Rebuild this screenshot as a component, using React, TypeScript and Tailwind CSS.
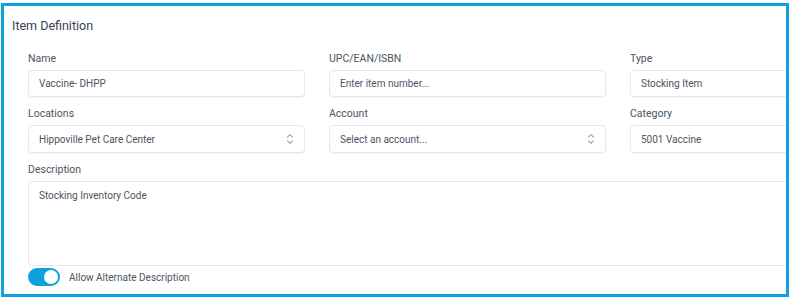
import React from "react";

const font = { fontFamily: "Roboto, 'Liberation Sans', sans-serif" };

function Chevrons() {
  return (
    <svg width="8" height="12" viewBox="0 0 8 12" fill="none" stroke="#9ca3af" strokeWidth="1.1" strokeLinecap="round" strokeLinejoin="round">
      <path d="M1.5 4.2 L4 1.7 L6.5 4.2" />
      <path d="M1.5 7.8 L4 10.3 L6.5 7.8" />
    </svg>
  );
}

function Field({ label, value, placeholder, select, h }: { label: string; value?: string; placeholder?: string; select?: boolean; h: string }) {
  return (
    <div className="flex flex-col">
      <div className="h-[14px] text-[10.5px] leading-[14px] text-[#4b5563]">{label}</div>
      <div className={`mt-[4px] ${h} flex items-center justify-between rounded-[4px] border border-[#e5e7eb] bg-white pl-[10px] pr-[10px] shadow-[0_1px_1px_rgba(0,0,0,0.04)]`}>
        <span className="text-[10px] text-[#4b5563]">{value ?? placeholder}</span>
        {select && <Chevrons />}
      </div>
    </div>
  );
}

export default function App() {
  return (
    <div className="w-[795px] h-[301px] bg-white" style={font}>
      <div className="ml-[1px] pt-[3px]">
        <div className="w-[788px] h-[294px] border-[3px] border-[#0ea1dd] overflow-hidden bg-white">
          <div className="pl-[8px] pt-[12px] h-[16px] text-[12.5px] leading-[16px] text-[#374151] box-content">Item Definition</div>
          <div className="pl-[24px] pt-[18px] w-[900px]">
            <div className="grid grid-cols-[277px_277px_277px] gap-x-[24px] gap-y-[10px]">
              <Field label="Name" value="Vaccine- DHPP" h="h-[27px]" />
              <Field label="UPC/EAN/ISBN" placeholder="Enter item number..." h="h-[27px]" />
              <Field label="Type" value="Stocking Item" h="h-[27px]" />
              <Field label="Locations" value="Hippoville Pet Care Center" select h="h-[28px]" />
              <Field label="Account" placeholder="Select an account..." select h="h-[28px]" />
              <Field label="Category" value="5001 Vaccine" h="h-[28px]" />
            </div>
            <div className="mt-[10px] h-[14px] text-[10.5px] leading-[14px] text-[#4b5563]">Description</div>
            <div className="mt-[4px] h-[85px] w-[860px] rounded-[4px] border border-[#e5e7eb] bg-white px-[10px] pt-[6px] text-[10px] text-[#4b5563]">
              Stocking Inventory Code
            </div>
            <div className="mt-[2px] flex items-center gap-[9px]">
              <div className="w-[32px] h-[18px] rounded-full bg-[#0ea1dd] flex items-center justify-end pr-[2px]">
                <div className="w-[14px] h-[14px] rounded-full bg-white" />
              </div>
              <span className="text-[10px] text-[#4b5563]">Allow Alternate Description</span>
            </div>
          </div>
        </div>
      </div>
    </div>
  );
}
